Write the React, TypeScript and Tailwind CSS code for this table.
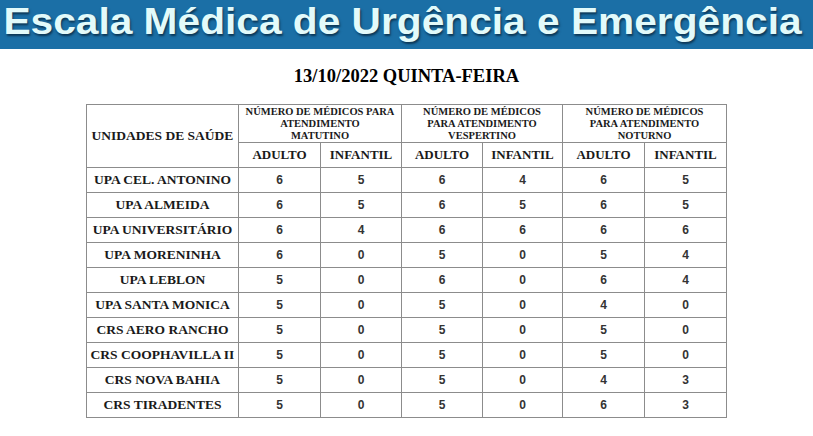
import React from "react";

const rows: [string, number[]][] = [
  ["UPA CEL. ANTONINO", [6, 5, 6, 4, 6, 5]],
  ["UPA ALMEIDA", [6, 5, 6, 5, 6, 5]],
  ["UPA UNIVERSITÁRIO", [6, 4, 6, 6, 6, 6]],
  ["UPA MORENINHA", [6, 0, 5, 0, 5, 4]],
  ["UPA LEBLON", [5, 0, 6, 0, 6, 4]],
  ["UPA SANTA MONICA", [5, 0, 5, 0, 4, 0]],
  ["CRS AERO RANCHO", [5, 0, 5, 0, 5, 0]],
  ["CRS COOPHAVILLA II", [5, 0, 5, 0, 5, 0]],
  ["CRS NOVA BAHIA", [5, 0, 5, 0, 4, 3]],
  ["CRS TIRADENTES", [5, 0, 5, 0, 6, 3]],
];

const groups = [
  ["NÚMERO DE MÉDICOS PARA", "ATENDIMENTO", "MATUTINO"],
  ["NÚMERO DE MÉDICOS", "PARA ATENDIMENTO", "VESPERTINO"],
  ["NÚMERO DE MÉDICOS", "PARA ATENDIMENTO", "NOTURNO"],
];

const serif = "font-['Liberation_Serif','Times_New_Roman',serif]";
const cell = "border border-[#8c8c8c] text-center align-middle p-0";

export default function App() {
  return (
    <div className="w-[813px] h-[436px] bg-white overflow-hidden flex flex-col">
      {/* Banner */}
      <div className="h-[49px] bg-[#1b6fa6] flex items-start pt-[4px] overflow-hidden">
        <span className="inline-block origin-left scale-x-[1.13] pl-[3px] text-[36px] leading-[36px] font-bold text-[#e2fafa] font-['Liberation_Sans',Arial,sans-serif] whitespace-nowrap [text-shadow:1px_2px_2px_rgba(5,30,50,0.7)]">
          Escala Médica de Urgência e Emergência
        </span>
      </div>

      {/* Date */}
      <div className={`pt-[16px] h-[55px] text-center text-[18.5px] leading-[22px] font-bold text-black ${serif}`}>
        13/10/2022 QUINTA-FEIRA
      </div>

      {/* Table */}
      <table className="mx-auto table-fixed border-collapse w-[640px]">
        <colgroup>
          <col className="w-[152px]" />
          <col className="w-[82px]" />
          <col className="w-[81px]" />
          <col className="w-[81px]" />
          <col className="w-[80px]" />
          <col className="w-[82px]" />
          <col className="w-[82px]" />
        </colgroup>
        <thead className={`${serif} font-bold text-[#1a1a1a]`}>
          <tr className="h-[38px]">
            <th rowSpan={2} className={`${cell} text-[13.5px]`}>
              UNIDADES DE SAÚDE
            </th>
            {groups.map((g, i) => (
              <th key={i} colSpan={2} className={`${cell} text-[10.5px] leading-[12px]`}>
                {g.map((line) => (
                  <div key={line}>{line}</div>
                ))}
              </th>
            ))}
          </tr>
          <tr className="h-[25px]">
            {[0, 1, 2].map((i) => (
              <React.Fragment key={i}>
                <th className={`${cell} text-[13px]`}>ADULTO</th>
                <th className={`${cell} text-[13px]`}>INFANTIL</th>
              </React.Fragment>
            ))}
          </tr>
        </thead>
        <tbody>
          {rows.map(([name, vals]) => (
            <tr key={name} className="h-[25px]">
              <td className={`${cell} ${serif} font-bold text-[13.5px] text-[#1a1a1a] whitespace-nowrap`}>
                {name}
              </td>
              {vals.map((v, i) => (
                <td
                  key={i}
                  className={`${cell} font-['Liberation_Sans',Arial,sans-serif] font-bold text-[12px] text-[#333]`}
                >
                  {v}
                </td>
              ))}
            </tr>
          ))}
        </tbody>
      </table>
    </div>
  );
}
